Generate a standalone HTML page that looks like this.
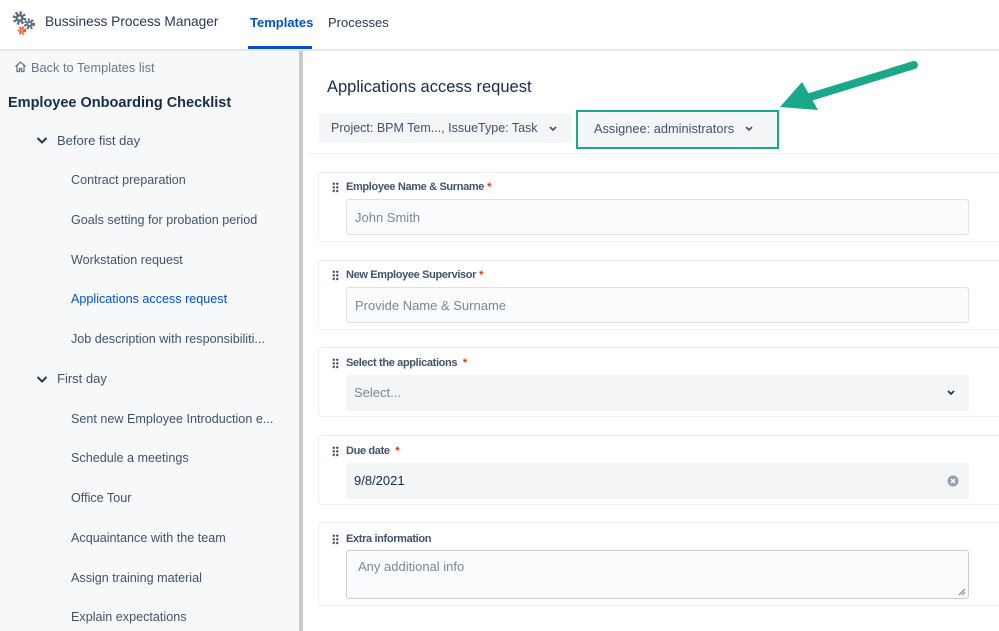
<!DOCTYPE html>
<html><head><style>
*{margin:0;padding:0;box-sizing:border-box}
body{width:999px;height:631px;overflow:hidden;background:#fff;font-family:"Liberation Sans",sans-serif;color:#172b4d;position:relative}
.a{position:absolute;white-space:nowrap}
.side{position:absolute;left:0;top:51px;width:300px;height:580px;background:#f7f8fa}
.sb{position:absolute;left:299px;top:51px;width:4px;height:580px;background:#c9c9c9}
.it{position:absolute;left:71px;font-size:12.6px;color:#42526e;line-height:16px}
.card{position:absolute;left:318px;width:700px;border:1px solid #eef0f2;border-radius:4px;background:#fff}
.lbl{position:absolute;left:346px;font-size:11px;color:#42526e;font-weight:bold;letter-spacing:-.35px}
.lbl b{color:#de350b;margin-left:3px}
.dots{position:absolute;left:332px;width:7px;height:11px;background:radial-gradient(circle,#42526e 1.1px,transparent 1.3px) 0 0/3.5px 3.6px}
.inp{position:absolute;left:346px;width:623px;height:36px;border-radius:3px;font-size:13px;padding:10px 8px;line-height:16px}
</style></head><body>
<div class="a" style="left:0;top:49px;width:999px;height:2px;background:#e6e8eb"></div>
<svg class="a" style="left:11px;top:10px" width="26" height="26" viewBox="0 0 26 26">
<circle cx="8.5" cy="8" r="5" fill="none" stroke="#5e6c84" stroke-width="3.5" stroke-dasharray="2.2 1.7"/><circle cx="8.5" cy="8" r="4" fill="#5e6c84"/><circle cx="8.5" cy="8" r="1.5" fill="#fff"/>
<circle cx="18.5" cy="14" r="4" fill="none" stroke="#5e6c84" stroke-width="3" stroke-dasharray="2 1.4"/><circle cx="18.5" cy="14" r="3" fill="#5e6c84"/><circle cx="18.5" cy="14" r="1.2" fill="#fff"/>
<circle cx="11" cy="20.5" r="3" fill="none" stroke="#f05a28" stroke-width="2.6" stroke-dasharray="1.6 1.2"/><circle cx="11" cy="20.5" r="2.3" fill="#f05a28"/><circle cx="11" cy="20.5" r="0.9" fill="#fff"/>
</svg>
<div class="a" style="left:45px;top:14px;font-size:13.7px;color:#253858">Bussiness Process Manager</div>
<div class="a" style="left:250px;top:15px;font-size:13px;color:#0052cc;font-weight:bold">Templates</div>
<div class="a" style="left:248px;top:46px;width:64px;height:3px;background:#0052cc"></div>
<div class="a" style="left:328px;top:15px;font-size:13px;color:#253858">Processes</div>

<div class="side"></div><div class="sb"></div>
<svg class="a" style="left:14px;top:60px" width="13" height="13" viewBox="0 0 13 13"><path d="M1.5 6.5L6.5 2l5 4.5M3 5.5V11.5h2.5V8.5h2v3H10V5.5" fill="none" stroke="#6b778c" stroke-width="1.3"/></svg>
<div class="a" style="left:31px;top:60px;font-size:12.8px;color:#6b778c">Back to Templates list</div>
<div class="a" style="left:8px;top:95px;font-size:14.5px;font-weight:bold;color:#172b4d">Employee Onboarding Checklist</div>
<svg class="a" style="left:36px;top:136px" width="12" height="9" viewBox="0 0 12 9"><path d="M1.5 2l4.5 4.5L10.5 2" fill="none" stroke="#253858" stroke-width="2"/></svg>
<div class="a" style="left:57px;top:133px;font-size:13px;color:#42526e">Before fist day</div>
<div class="it" style="top:172px">Contract preparation</div>
<div class="it" style="top:212px">Goals setting for probation period</div>
<div class="it" style="top:252px">Workstation request</div>
<div class="it" style="top:291px;color:#0052cc">Applications access request</div>
<div class="it" style="top:331px">Job description with responsibiliti...</div>
<svg class="a" style="left:36px;top:375px" width="12" height="9" viewBox="0 0 12 9"><path d="M1.5 2l4.5 4.5L10.5 2" fill="none" stroke="#253858" stroke-width="2"/></svg>
<div class="a" style="left:57px;top:371px;font-size:13px;color:#42526e">First day</div>
<div class="it" style="top:411px">Sent new Employee Introduction e...</div>
<div class="it" style="top:450px">Schedule a meetings</div>
<div class="it" style="top:490px">Office Tour</div>
<div class="it" style="top:530px">Acquaintance with the team</div>
<div class="it" style="top:570px">Assign training material</div>
<div class="it" style="top:609px">Explain expectations</div>

<div class="a" style="left:327px;top:78px;font-size:16.5px;color:#172b4d">Applications access request</div>
<div class="a" style="left:319px;top:113px;width:253px;height:30px;background:#f4f5f7;border-radius:3px"></div>
<div class="a" style="left:331px;top:121px;font-size:12.5px;color:#42526e">Project: BPM Tem..., IssueType: Task</div>
<svg class="a" style="left:548px;top:125px" width="10" height="7" viewBox="0 0 10 7"><path d="M2 2l3 3 3-3" fill="none" stroke="#42526e" stroke-width="1.6"/></svg>
<div class="a" style="left:576px;top:110px;width:203px;height:39px;border:2px solid #1aa88a;background:#f4f5f7"></div>
<div class="a" style="left:594px;top:121px;font-size:12.8px;color:#42526e">Assignee: administrators</div>
<svg class="a" style="left:744px;top:125px" width="10" height="7" viewBox="0 0 10 7"><path d="M2 2l3 3 3-3" fill="none" stroke="#42526e" stroke-width="1.6"/></svg>
<div class="a" style="left:308px;top:153px;width:691px;height:1px;background:#eef0f2"></div>
<svg class="a" style="left:770px;top:55px" width="160" height="65" viewBox="0 0 160 65"><path d="M144 10L40 42" stroke="#1aa88a" stroke-width="8" stroke-linecap="round"/><path d="M10 52L32 27 48 55Z" fill="#1aa88a"/></svg>

<div class="card" style="top:172px;height:70px"></div>
<div class="dots" style="top:182px"></div><div class="lbl" style="top:181px">Employee Name &amp; Surname<b>*</b></div>
<div class="inp" style="top:199px;background:#fafbfc;border:1px solid #dfe1e6;color:#7a869a">John Smith</div>
<div class="card" style="top:260px;height:70px"></div>
<div class="dots" style="top:270px"></div><div class="lbl" style="top:269px">New Employee Supervisor<b>*</b></div>
<div class="inp" style="top:287px;background:#fafbfc;border:1px solid #dfe1e6;color:#7a869a">Provide Name &amp; Surname</div>
<div class="card" style="top:347px;height:70px"></div>
<div class="dots" style="top:358px"></div><div class="lbl" style="top:357px">Select the applications <b>*</b></div>
<div class="inp" style="top:375px;background:#f4f5f7;color:#7a869a">Select...</div>
<svg class="a" style="left:946px;top:389px" width="10" height="7" viewBox="0 0 10 7"><path d="M2 2l3 3 3-3" fill="none" stroke="#253858" stroke-width="1.8"/></svg>
<div class="card" style="top:435px;height:70px"></div>
<div class="dots" style="top:446px"></div><div class="lbl" style="top:445px">Due date <b>*</b></div>
<div class="inp" style="top:463px;background:#f4f5f7;color:#172b4d">9/8/2021</div>
<svg class="a" style="left:947px;top:475px" width="12" height="12" viewBox="0 0 12 12"><circle cx="6" cy="6" r="5.5" fill="#97a0af"/><path d="M4 4l4 4M8 4l-4 4" stroke="#fff" stroke-width="1.4"/></svg>
<div class="card" style="top:522px;height:84px"></div>
<div class="dots" style="top:534px"></div><div class="lbl" style="top:533px">Extra information</div>
<div class="inp" style="top:550px;height:49px;background:#fafbfc;border:1px solid #c9ccd2;color:#7a869a;padding:8px 11px">Any additional info</div>
<svg class="a" style="left:956px;top:586px" width="10" height="10" viewBox="0 0 10 10"><path d="M9 3L3 9M9 6L6 9" stroke="#6b778c" stroke-width="1"/></svg>
</body></html>
